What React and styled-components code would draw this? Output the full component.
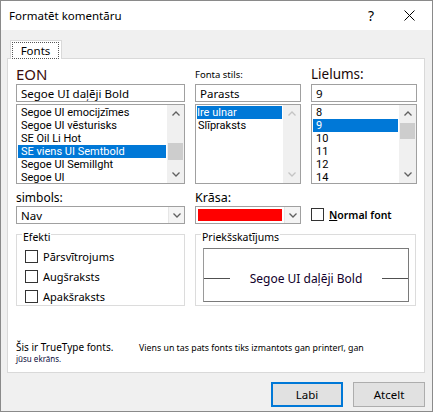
import React from 'react';
import styled, {createGlobalStyle} from 'styled-components';

const GlobalStyle = createGlobalStyle`
    html, body {
        margin: 0;
        padding: 0;
        background: #ffffff;
    }
    body {
        font-family: "Noto Sans", "Liberation Sans", sans-serif;
        font-size: 12px;
        color: #000;
    }
    * {
        box-sizing: border-box;
    }
`;

const Window = styled.div`
    width: 433px;
    height: 412px;
    border: 1px solid #8a8a8a;
    background: #f0f0f0;
    display: flex;
    flex-direction: column;
`;

const TitleBar = styled.div`
    height: 29px;
    background: #ffffff;
    display: flex;
    align-items: center;
    padding-left: 8px;
`;

const Title = styled.div`
    flex: 1;
    font-size: 11.5px;
`;

const TitleButton = styled.div`
    width: ${(p) => p.$w}px;
    display: flex;
    align-items: center;
    justify-content: center;
    font-size: 14px;
`;

const Body = styled.div`
    flex: 1;
    display: flex;
    flex-direction: column;
    padding: 10px 7px 0 6px;
`;

const TabStrip = styled.div`
    display: flex;
    padding-left: 3px;
`;

const Tab = styled.div`
    width: 52px;
    height: 19px;
    margin-bottom: -1px;
    background: #ffffff;
    border: 1px solid #d9d9d9;
    border-bottom: none;
    padding: 1px 2px 0 1px;
    position: relative;
    z-index: 1;
`;

const FocusRect = styled.div`
    height: 100%;
    border: 1px dotted #555;
    display: flex;
    align-items: center;
    justify-content: center;
    font-size: 11.5px;
`;

const Panel = styled.div`
    height: 315px;
    background: #ffffff;
    border: 1px solid #d9d9d9;
    padding: 0 7px 0 8px;
    display: flex;
    flex-direction: column;
`;

const Grid = styled.div`
    display: grid;
    grid-template-columns: 169px 106px 106px;
    column-gap: 10px;
`;

const Column = styled.div`
    display: flex;
    flex-direction: column;
`;

const Label = styled.div`
    height: ${(p) => p.$h || 25}px;
    display: flex;
    align-items: flex-end;
    font-size: ${(p) => p.$size || 12}px;
    color: ${(p) => p.$color || '#000'};
    line-height: 1.15;
    padding-bottom: ${(p) => p.$pb || 1}px;
`;

const TextInput = styled.div`
    height: 18px;
    border: 1px solid #a0a0a0;
    background: #fff;
    display: flex;
    align-items: center;
    padding-left: 4px;
    font-size: 11.5px;
    margin-bottom: 2px;
`;

const ListBox = styled.div`
    height: 80px;
    border: 1px solid #a0a0a0;
    background: #fff;
    display: flex;
`;

const ListItems = styled.div`
    flex: 1;
    padding: 0 1px;
`;

const ListItem = styled.div`
    height: 13px;
    line-height: 13px;
    padding-left: ${(p) => p.$pl ?? 3}px;
    font-family: Roboto, "Noto Sans", sans-serif;
    font-size: 11px;
    white-space: nowrap;
    background: ${(p) => (p.$selected ? '#0078d7' : 'transparent')};
    color: ${(p) => (p.$selected ? '#fff' : '#000')};
    &:first-child {
        margin-top: ${(p) => p.$top ?? 0}px;
    }
`;

const ScrollBar = styled.div`
    width: 17px;
    background: #f0f0f0;
    display: flex;
    flex-direction: column;
`;

const ScrollArrow = styled.div`
    height: 17px;
    display: flex;
    align-items: center;
    justify-content: center;
`;

const ScrollTrack = styled.div`
    flex: 1;
    display: flex;
    flex-direction: column;
`;

const ScrollThumb = styled.div`
    margin: ${(p) => p.$offset}px 1px 0;
    height: ${(p) => p.$size}px;
    background: #cdcdcd;
`;

const Chevron = ({up, color = '#606060'}) => (
    <svg width="8" height="5" viewBox="0 0 8 5">
        <path
            d={up ? 'M0.5 4.5 L4 1 L7.5 4.5' : 'M0.5 0.5 L4 4 L7.5 0.5'}
            fill="none"
            stroke={color}
            strokeWidth="1.3"
        />
    </svg>
);

const Scroll = ({thumb, disabled}) => {
    const c = disabled ? '#c4c4c4' : '#606060';
    return (
        <ScrollBar>
            <ScrollArrow>
                <Chevron up color={c} />
            </ScrollArrow>
            <ScrollTrack>
                {thumb && <ScrollThumb $offset={thumb[0]} $size={thumb[1]} />}
            </ScrollTrack>
            <ScrollArrow>
                <Chevron color={c} />
            </ScrollArrow>
        </ScrollBar>
    );
};

const Combo = styled.div`
    height: 18px;
    border: 1px solid #a0a0a0;
    background: #fff;
    display: flex;
`;

const ComboValue = styled.div`
    flex: 1;
    display: flex;
    align-items: center;
    padding-left: 4px;
    font-size: 11.5px;
`;

const Swatch = styled.div`
    flex: 1;
    margin: 2px;
    background: #ff0000;
`;

const ComboButton = styled.div`
    width: 16px;
    border-left: 1px solid #e6e6e6;
    background: #f4f4f4;
    display: flex;
    align-items: center;
    justify-content: center;
`;

const CheckRow = styled.label`
    height: 13px;
    display: flex;
    align-items: center;
    gap: 5px;
    font-size: ${(p) => (p.$bold ? 10.5 : 11)}px;
    font-weight: ${(p) => (p.$bold ? 600 : 400)};
`;

const CheckBox = styled.span`
    width: 13px;
    height: 13px;
    border: 1px solid #333;
    background: #fff;
    flex: none;
`;

const Groups = styled.div`
    display: grid;
    grid-template-columns: 169px 221px;
    column-gap: 10px;
    margin-top: 10px;
`;

const Group = styled.div`
    position: relative;
    height: 72px;
    border: 1px solid #dcdcdc;
    padding: ${(p) => p.$pad};
    display: flex;
    flex-direction: column;
    gap: 7px;
`;

const GroupLabel = styled.span`
    position: absolute;
    top: -4px;
    left: 5px;
    padding: 0 1px;
    background: #fff;
    font-size: 10.5px;
    line-height: 13px;
`;

const PreviewBox = styled.div`
    height: 54px;
    border: 1px solid #7a7a7a;
    border-left-color: #9a9a9a;
    display: flex;
    align-items: center;
    padding-top: 6px;
`;

const PreviewLine = styled.div`
    width: 26px;
    height: 1px;
    background: #505050;
`;

const PreviewText = styled.div`
    flex: 1;
    text-align: center;
    font-size: 12px;
    color: #10002a;
`;

const Info = styled.div`
    margin-top: 34px;
    display: flex;
    flex-direction: column;
`;

const InfoLine = styled.div`
    display: flex;
    align-items: baseline;
    height: ${(p) => p.$h}px;
    white-space: nowrap;
`;

const InfoText = styled.span`
    flex: none;
    width: ${(p) => (p.$w ? `${p.$w}px` : 'auto')};
    font-size: ${(p) => p.$size}px;
    color: ${(p) => p.$color || '#000'};
`;

const Footer = styled.div`
    display: flex;
    justify-content: flex-end;
    gap: 10px;
    padding-top: 9px;
`;

const Button = styled.button`
    width: 72px;
    height: 25px;
    background: #e1e1e1;
    border: ${(p) => (p.$default ? '2px solid #0078d7' : '1px solid #adadad')};
    font-family: inherit;
    font-size: 11.5px;
    color: #000;
    padding: 0;
`;

const Underline = styled.span`
    text-decoration: underline;
`;

export default function App() {
    return (
        <>
            <GlobalStyle />
            <Window>
                <TitleBar>
                    <Title>Formatēt komentāru</Title>
                    <TitleButton $w={30}>?</TitleButton>
                    <TitleButton $w={46}>
                        <svg width="11" height="11" viewBox="0 0 11 11">
                            <path d="M0.5 0.5 L10.5 10.5 M10.5 0.5 L0.5 10.5" stroke="#000" strokeWidth="1" />
                        </svg>
                    </TitleButton>
                </TitleBar>
                <Body>
                    <TabStrip>
                        <Tab>
                            <FocusRect>Fonts</FocusRect>
                        </Tab>
                    </TabStrip>
                    <Panel>
                        <Grid>
                            <Column>
                                <Label $size={15} $color="#3a0c0c">EON</Label>
                                <TextInput>Segoe UI daļēji Bold</TextInput>
                                <ListBox>
                                    <ListItems>
                                        <ListItem $top={1}>Segoe UI emocijzīmes</ListItem>
                                        <ListItem>Segoe UI vēsturisks</ListItem>
                                        <ListItem>SE Oil Li Hot</ListItem>
                                        <ListItem $selected>SE viens UI Semtbold</ListItem>
                                        <ListItem>Segoe UI Semillght</ListItem>
                                        <ListItem>Segoe UI</ListItem>
                                    </ListItems>
                                    <Scroll thumb={[21, 17]} />
                                </ListBox>
                            </Column>
                            <Column>
                                <Label $size={9.5} $pb={3}>Fonta stils:</Label>
                                <TextInput>Parasts</TextInput>
                                <ListBox>
                                    <ListItems>
                                        <ListItem $top={1} $pl={0} $selected>Ire ulnar</ListItem>
                                        <ListItem $pl={1}>Slīpraksts</ListItem>
                                    </ListItems>
                                    <Scroll disabled />
                                </ListBox>
                            </Column>
                            <Column>
                                <Label $size={13.5} $color="#1a0808">Lielums:</Label>
                                <TextInput>9</TextInput>
                                <ListBox>
                                    <ListItems>
                                        <ListItem $top={1}>8</ListItem>
                                        <ListItem $selected>9</ListItem>
                                        <ListItem>10</ListItem>
                                        <ListItem>11</ListItem>
                                        <ListItem>12</ListItem>
                                        <ListItem>14</ListItem>
                                    </ListItems>
                                    <Scroll thumb={[1, 16]} />
                                </ListBox>
                            </Column>

                            <Column>
                                <Label $h={22} $size={12}>simbols:</Label>
                                <Combo>
                                    <ComboValue>Nav</ComboValue>
                                    <ComboButton>
                                        <Chevron />
                                    </ComboButton>
                                </Combo>
                            </Column>
                            <Column>
                                <Label $h={22} $size={12.5}>Krāsa:</Label>
                                <Combo>
                                    <Swatch />
                                    <ComboButton>
                                        <Chevron />
                                    </ComboButton>
                                </Combo>
                            </Column>
                            <Column>
                                <Label $h={24} />
                                <CheckRow $bold>
                                    <CheckBox />
                                    <span>
                                        <Underline>N</Underline>ormal font
                                    </span>
                                </CheckRow>
                            </Column>
                        </Grid>

                        <Groups>
                            <Group $pad="15px 8px 0">
                                <GroupLabel>Efekti</GroupLabel>
                                <CheckRow>
                                    <CheckBox />
                                    Pārsvītrojums
                                </CheckRow>
                                <CheckRow>
                                    <CheckBox />
                                    Augšraksts
                                </CheckRow>
                                <CheckRow>
                                    <CheckBox />
                                    Apakšraksts
                                </CheckRow>
                            </Group>
                            <Group $pad="13px 6px 0 7px">
                                <GroupLabel>Priekšskatījums</GroupLabel>
                                <PreviewBox>
                                    <PreviewLine />
                                    <PreviewText>Segoe UI daļēji Bold</PreviewText>
                                    <PreviewLine />
                                </PreviewBox>
                            </Group>
                        </Groups>

                        <Info>
                            <InfoLine $h={13}>
                                <InfoText $size={10} $w={123}>Šis ir TrueType fonts.</InfoText>
                                <InfoText $size={8.8}>
                                    Viens un tas pats fonts tiks izmantots gan printerī, gan
                                </InfoText>
                            </InfoLine>
                            <InfoLine $h={12}>
                                <InfoText $size={8} $color="#0a0a3a">jūsu ekrāns.</InfoText>
                            </InfoLine>
                        </Info>
                    </Panel>
                    <Footer>
                        <Button $default>Labi</Button>
                        <Button>Atcelt</Button>
                    </Footer>
                </Body>
            </Window>
        </>
    );
}
